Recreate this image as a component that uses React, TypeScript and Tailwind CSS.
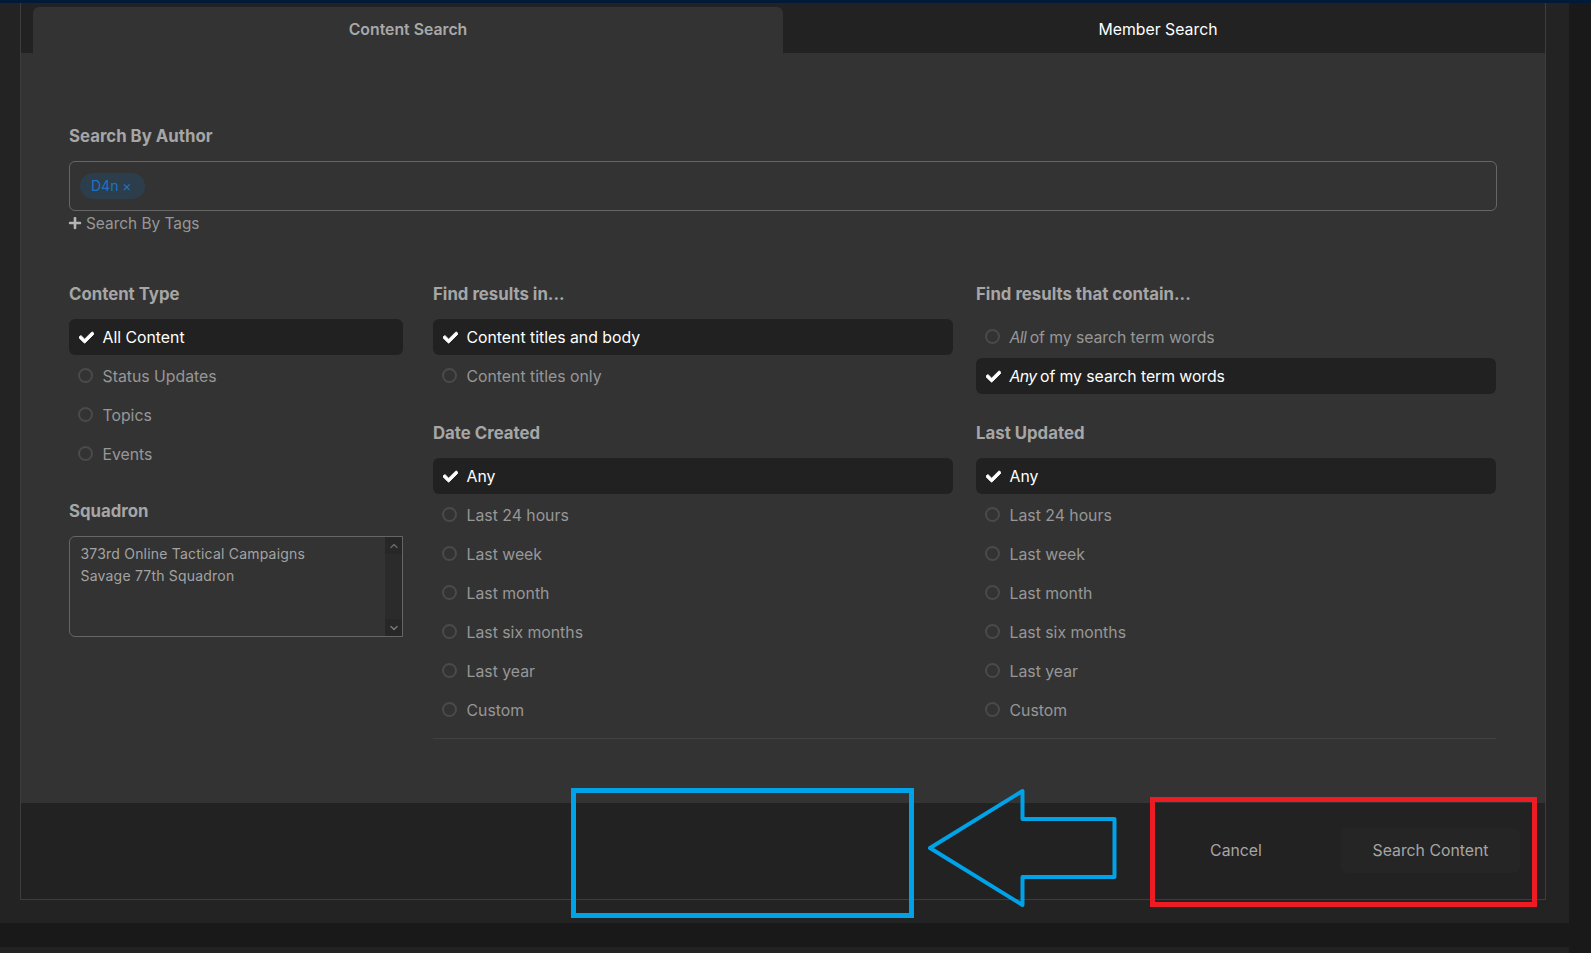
import { ReactNode } from 'react'
import { FaCheck, FaPlus } from 'react-icons/fa'
import { ChevronDown, ChevronUp } from 'lucide-react'

const DATE_OPTIONS = ['Any', 'Last 24 hours', 'Last week', 'Last month', 'Last six months', 'Last year', 'Custom']

function Label({ children, className = '' }: { children: ReactNode; className?: string }) {
  return <h3 className={`h-[24px] mb-[13px] text-[16.8px] leading-[24px] font-bold text-[#a6a6a6] ${className}`}>{children}</h3>
}

function Option({ children, selected = false }: { children: ReactNode; selected?: boolean }) {
  return (
    <div
      className={`h-[36px] mb-[3px] pl-[9px] flex items-center gap-[9.5px] rounded-md text-[15.8px] ${
        selected ? 'bg-[#212121] text-white' : 'text-[#979797]'
      }`}
    >
      {selected ? (
        <FaCheck size={15} stroke="currentColor" strokeWidth={30} className="ml-[1px] -mr-[1px] shrink-0 text-white" />
      ) : (
        <span className="w-[15px] h-[15px] -mt-[2px] shrink-0 rounded-full border-2 border-[#4a4a4a]" />
      )}
      <span className="mt-[2px]">{children}</span>
    </div>
  )
}

function DateList() {
  return (
    <>
      {DATE_OPTIONS.map((o, i) => (
        <Option key={o} selected={i === 0}>
          {o}
        </Option>
      ))}
    </>
  )
}

export default function App() {
  return (
    <div className="relative w-[1591px] h-[953px] overflow-hidden bg-[#191919] font-['Inter',sans-serif]">
      <div className="h-[3px] bg-[#001a3a]" />
      <div className="w-[1569px] h-[920px] pl-[20px] bg-[#232323]">
        <div className="w-[1526px] h-[897px] flex flex-col border-x border-b border-[#3d3d3d]">
          {/* tabs */}
          <div className="h-[50px] shrink-0 pl-[12px] flex items-end bg-[#222222]">
            <div className="w-[750px] h-[46px] flex items-center justify-center rounded-t-md bg-[#333333] text-[15.8px] font-semibold text-[#a9a9a9]">
              Content Search
            </div>
            <div className="w-[750px] h-[46px] flex items-center justify-center text-[15.8px] font-normal text-white">
              Member Search
            </div>
          </div>

          <div className="flex-1 pt-[71px] px-[48px] bg-[#333333]">
            <Label>Search By Author</Label>
            <div className="w-[1428px] h-[50px] px-[10px] flex items-center rounded-md border border-[#666666]">
              <span className="h-[26px] pl-[11px] pr-[13px] pb-[1px] flex items-center rounded-full bg-[#2c3e4c] text-[14px] text-[#1f72c4]">
                D4n ×
              </span>
            </div>
            <div className="h-[24px] flex items-center gap-[4px] -ml-[1px] text-[15.4px] text-[#979797]">
              <FaPlus size={14} className="text-[#b5b5b5]" />
              <span className="mt-[2px]">Search By Tags</span>
            </div>

            <div className="mt-[47px] flex">
              <div className="w-[334px] shrink-0">
                <Label>Content Type</Label>
                <Option selected>All Content</Option>
                <Option>Status Updates</Option>
                <Option>Topics</Option>
                <Option>Events</Option>
                <Label className="mt-[27px]">Squadron</Label>
                <div className="h-[101px] flex rounded-l-md border border-[#666666]">
                  <div className="flex-1 pt-[6px] pl-[10.5px] text-[14px] leading-[22px] tracking-[0.2px] text-[#a3a3a3]">
                    <div>373rd Online Tactical Campaigns</div>
                    <div>Savage 77th Squadron</div>
                  </div>
                  <div className="w-[17px] flex flex-col justify-between bg-[#2b2b2b]">
                    <div className="h-[17px] flex items-center justify-center bg-[#272727]">
                      <ChevronUp size={12} strokeWidth={3} className="text-[#666666]" />
                    </div>
                    <div className="h-[17px] flex items-center justify-center bg-[#272727]">
                      <ChevronDown size={12} strokeWidth={3} className="text-[#777777]" />
                    </div>
                  </div>
                </div>
              </div>

              <div className="w-[1063px] ml-[30px] shrink-0">
                <div className="flex gap-[23px]">
                  <div className="w-[520px]">
                    <Label>Find results in...</Label>
                    <Option selected>Content titles and body</Option>
                    <Option>Content titles only</Option>
                    <Label className="mt-[27px]">Date Created</Label>
                    <DateList />
                  </div>
                  <div className="w-[520px]">
                    <Label>Find results that contain...</Label>
                    <Option>
                      <em className="tracking-[-0.6px]">All</em>
                      <span className="ml-[-1px] tracking-[-0.06px]"> of my search term words</span>
                    </Option>
                    <Option selected>
                      <em className="tracking-[-0.6px]">Any</em>
                      <span className="ml-[-1px] tracking-[-0.06px]"> of my search term words</span>
                    </Option>
                    <Label className="mt-[27px]">Last Updated</Label>
                    <DateList />
                  </div>
                </div>
                <div className="mt-[7px] border-t border-[#414141]" />
              </div>
            </div>
          </div>

          <div className="h-[96px] shrink-0 pr-[25px] pb-[1px] flex items-center justify-end bg-[#222222] text-[15.8px] text-[#a6a6a6]">
            <div className="w-[130px] mr-[40px] text-center">Cancel</div>
            <div className="w-[179px] h-[45px] flex items-center justify-center rounded-md bg-[#252525]">Search Content</div>
          </div>
        </div>
      </div>
      <div className="h-[24px]" />
      <div className="w-[1569px] h-[6px] bg-[#222222]" />

      {/* annotations drawn over the screenshot */}
      <div className="absolute left-[571px] top-[788px] w-[343px] h-[130px] border-[5px] border-[#00a2e8]" />
      <svg className="absolute left-0 top-0 pointer-events-none" width="1591" height="953" fill="none">
        <path
          d="M930 848 L1022.5 791 V819 H1114.5 V877 H1022.5 V905 Z"
          stroke="#00a2e8"
          strokeWidth="4"
          strokeLinejoin="round"
        />
      </svg>
      <div className="absolute left-[1150px] top-[797px] w-[387px] h-[110px] border-[5px] border-[#ed1c24]" />
    </div>
  )
}
